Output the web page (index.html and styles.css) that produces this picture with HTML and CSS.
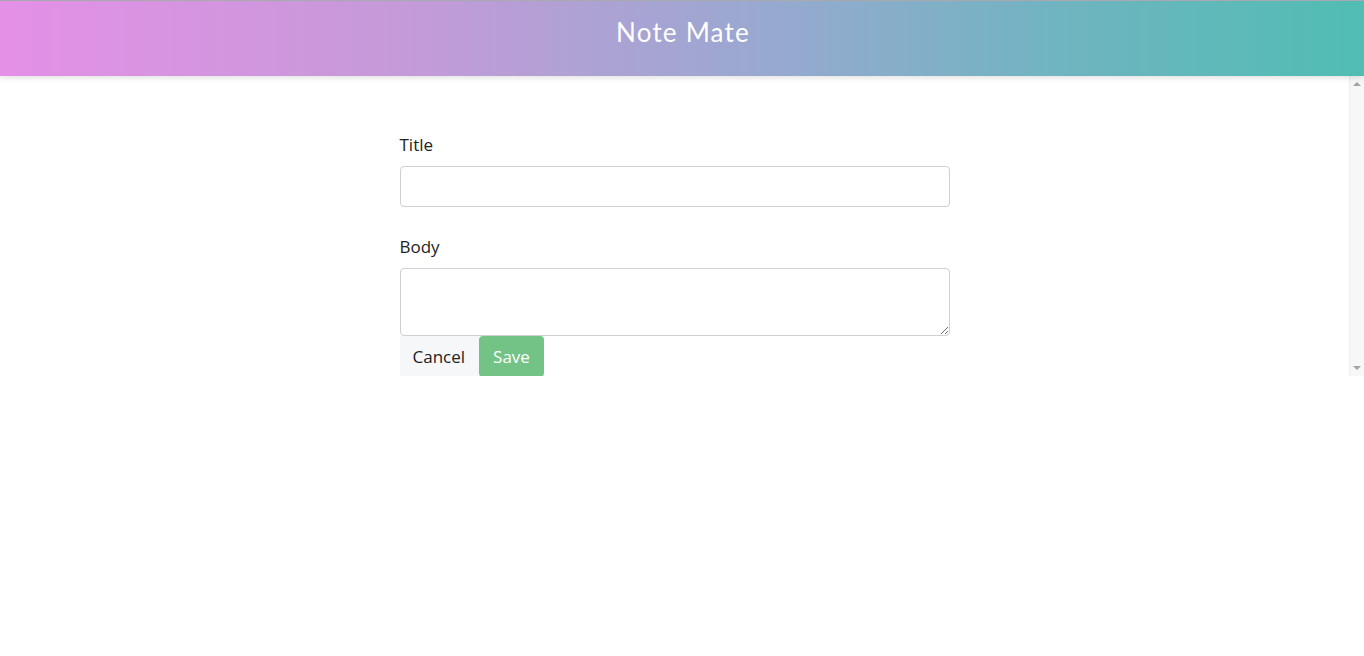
FILE: index.html
```html
<!DOCTYPE html>
<html>
<head>
<meta charset="utf-8">
<link rel="stylesheet" href="styles.css">
</head>
<body>
<header class="topbar"><h1 class="brand">Note Mate</h1></header>
<main class="content">
  <form class="note-form">
    <label class="field-label" for="title">Title</label>
    <input class="field-input" id="title" type="text">
    <label class="field-label body-label" for="body">Body</label>
    <textarea class="field-area" id="body"></textarea>
    <div class="actions">
      <button type="button" class="btn btn-cancel">Cancel</button>
      <button type="button" class="btn btn-save">Save</button>
    </div>
  </form>
  <div class="scrollbar" aria-hidden="true">
    <span class="arrow arrow-up"></span>
    <span class="arrow arrow-down"></span>
  </div>
</main>
</body>
</html>
```
FILE: styles.css
```css
html, body { margin: 0; padding: 0; background: #fff; }
body { font-family: "Open Sans", "Noto Sans", sans-serif; color: #222; overflow: hidden; }
.topbar {
  position: relative;
  z-index: 2;
  height: 76px;
  box-sizing: border-box;
  border-top: 1px solid #a8a8b0;
  background: linear-gradient(90deg, #e490e6 0%, #c49ad8 30%, #9aa8d0 55%, #6fb4c0 78%, #50bdb2 100%);
  box-shadow: 0 2px 6px rgba(0,0,0,0.12);
  display: flex;
  align-items: center;
  justify-content: center;
}
.brand {
  margin: 0;
  color: #fff;
  font-family: "Lato", sans-serif;
  font-weight: 400;
  font-size: 26px;
  letter-spacing: 1.2px;
  transform: translate(1px, -7px);
}
.content {
  position: relative;
  height: 300px;
  box-sizing: border-box;
  padding-right: 15px;
  overflow: hidden;
}
.scrollbar {
  position: absolute;
  top: 0;
  right: 0;
  bottom: 0;
  width: 15px;
  background: #f7f7f7;
  border-left: 1px solid #eeeeee;
  display: flex;
  flex-direction: column;
  justify-content: space-between;
  align-items: center;
  padding: 6px 0;
  box-sizing: border-box;
}
.arrow { width: 0; height: 0; border-left: 4px solid transparent; border-right: 4px solid transparent; }
.arrow-up { border-bottom: 4px solid #a3a3a3; }
.arrow-down { border-top: 4px solid #a3a3a3; }
.note-form {
  width: 550px;
  margin: 56px auto 0;
  display: flex;
  flex-direction: column;
}
.field-label {
  font-size: 17px;
  line-height: 26px;
  margin-bottom: 8px;
  color: #222;
}
.body-label { margin-top: 27px; }
.field-input {
  box-sizing: border-box;
  height: 41px;
  border: 1px solid #d0d0d0;
  border-radius: 4px;
  font: inherit;
  padding: 0 10px;
}
.field-area {
  box-sizing: border-box;
  height: 68px;
  border: 1px solid #d0d0d0;
  border-radius: 4px;
  font: inherit;
  padding: 6px 10px;
  resize: vertical;
}
.actions { display: flex; }
.btn {
  height: 41px;
  border: none;
  font-family: "Open Sans", "Noto Sans", sans-serif;
  font-size: 17px;
  padding: 0 14px;
  cursor: pointer;
}
.btn-cancel { background: #f6f7f9; color: #222; border-radius: 0 0 0 4px; padding: 0 14px 0 13px; }
.btn-save { background: #73c387; color: #fff; border-radius: 4px; padding: 0 14px; }
```
